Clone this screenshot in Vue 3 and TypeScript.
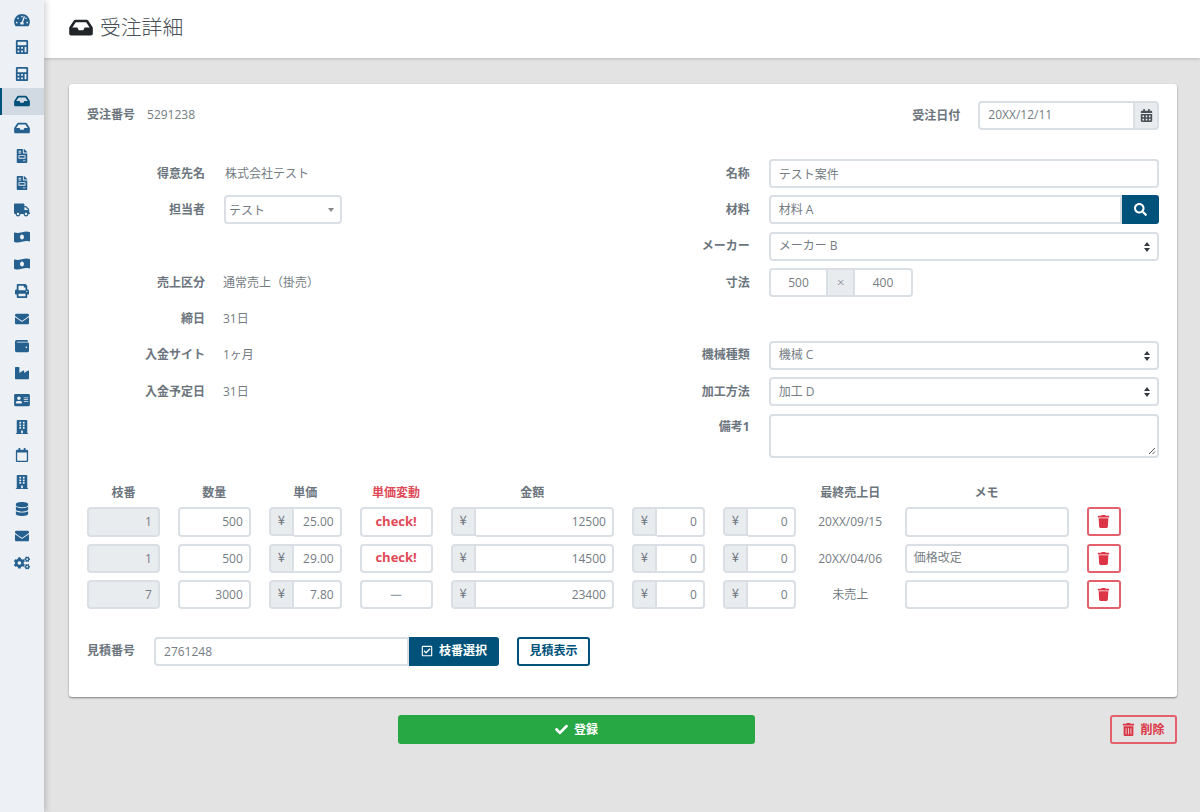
<script setup lang="ts">
const P: Record<string, [string, string]> = {
  tach: ['0 0 576 512', 'M288 32C128.94 32 0 160.94 0 320c0 52.8 14.25 102.26 39.06 144.8 5.61 9.62 16.3 15.2 27.44 15.2h443c11.14 0 21.83-5.58 27.44-15.2C561.75 422.26 576 372.8 576 320c0-159.06-128.94-288-288-288zm0 64c14.71 0 26.58 10.13 30.32 23.65-1.11 2.26-2.64 4.23-3.45 6.67l-9.22 27.67c-5.13 3.49-10.97 6.01-17.64 6.01-17.67 0-32-14.33-32-32S270.33 96 288 96zM96 384c-17.67 0-32-14.33-32-32s14.33-32 32-32 32 14.33 32 32-14.33 32-32 32zm48-160c-17.67 0-32-14.33-32-32s14.33-32 32-32 32 14.33 32 32-14.33 32-32 32zm246.77-72.41l-61.33 184C343.13 347.33 352 364.54 352 384c0 11.72-3.38 22.55-8.88 32H232.88c-5.5-9.45-8.88-20.28-8.88-32 0-33.94 26.5-61.43 59.9-63.59l61.34-184.01c4.17-12.56 17.73-19.45 30.36-15.17 12.57 4.19 19.35 17.79 15.17 30.36zm14.66 57.2l15.52-46.55c3.47-1.29 7.13-2.23 11.05-2.23 17.67 0 32 14.33 32 32s-14.33 32-32 32c-11.38-.01-20.89-6.28-26.57-15.22zM480 384c-17.67 0-32-14.33-32-32s14.33-32 32-32 32 14.33 32 32-14.33 32-32 32z'],
  calc: ['0 0 448 512', 'M400 0H48C22.4 0 0 22.4 0 48v416c0 25.6 22.4 48 48 48h352c25.6 0 48-22.4 48-48V48c0-25.6-22.4-48-48-48zM128 435c0 6.4-6.4 12.8-12.8 12.8H76.8c-6.4 0-12.8-6.4-12.8-12.8v-38.4c0-6.4 6.4-12.8 12.8-12.8h38.4c6.4 0 12.8 6.4 12.8 12.8V435zm0-128c0 6.4-6.4 12.8-12.8 12.8H76.8c-6.4 0-12.8-6.4-12.8-12.8v-38.4c0-6.4 6.4-12.8 12.8-12.8h38.4c6.4 0 12.8 6.4 12.8 12.8V307zm128 128c0 6.4-6.4 12.8-12.8 12.8h-38.4c-6.4 0-12.8-6.4-12.8-12.8v-38.4c0-6.4 6.4-12.8 12.8-12.8h38.4c6.4 0 12.8 6.4 12.8 12.8V435zm0-128c0 6.4-6.4 12.8-12.8 12.8h-38.4c-6.4 0-12.8-6.4-12.8-12.8v-38.4c0-6.4 6.4-12.8 12.8-12.8h38.4c6.4 0 12.8 6.4 12.8 12.8V307zm128 128c0 6.4-6.4 12.8-12.8 12.8h-38.4c-6.4 0-12.8-6.4-12.8-12.8V268.8c0-6.4 6.4-12.8 12.8-12.8h38.4c6.4 0 12.8 6.4 12.8 12.8V435zm0-256c0 6.4-6.4 12.8-12.8 12.8H76.8c-6.4 0-12.8-6.4-12.8-12.8V76.8C64 70.4 70.4 64 76.8 64h294.4c6.4 0 12.8 6.4 12.8 12.8V179z'],
  inbox: ['0 0 576 512', 'M567.938 243.908L462.25 85.374A48.003 48.003 0 0 0 422.311 64H153.689a48 48 0 0 0-39.938 21.374L8.062 243.908A47.994 47.994 0 0 0 0 270.533V400c0 26.51 21.49 48 48 48h480c26.51 0 48-21.49 48-48V270.533a47.994 47.994 0 0 0-8.062-26.625zM162.252 128h251.497l85.333 128H376l-32 64H232l-32-64H76.918l85.334-128z'],
  file: ['0 0 384 512', 'M288 256H96v64h192v-64zm89-151L279.1 7c-4.5-4.5-10.6-7-17-7H256v128h128v-6.1c0-6.3-2.5-12.4-7-16.9zm-153 31V0H24C10.7 0 0 10.7 0 24v464c0 13.3 10.7 24 24 24h336c13.3 0 24-10.7 24-24V160H248c-13.2 0-24-10.8-24-24zM64 72c0-4.42 3.58-8 8-8h80c4.42 0 8 3.58 8 8v16c0 4.42-3.58 8-8 8H72c-4.42 0-8-3.58-8-8V72zm0 64c0-4.42 3.58-8 8-8h80c4.42 0 8 3.58 8 8v16c0 4.42-3.58 8-8 8H72c-4.42 0-8-3.58-8-8v-16zm256 304c0 4.42-3.58 8-8 8h-80c-4.42 0-8-3.58-8-8v-16c0-4.42 3.58-8 8-8h80c4.42 0 8 3.58 8 8v16zm0-200v96c0 8.84-7.16 16-16 16H80c-8.84 0-16-7.16-16-16v-96c0-8.84 7.16-16 16-16h224c8.84 0 16 7.16 16 16z'],
  truck: ['0 0 640 512', 'M624 352h-16V243.9c0-12.7-5.1-24.9-14.1-33.9L494 110.1c-9-9-21.2-14.1-33.9-14.1H416V48c0-26.5-21.5-48-48-48H48C21.5 0 0 21.5 0 48v320c0 26.5 21.5 48 48 48h16c0 53 43 96 96 96s96-43 96-96h128c0 53 43 96 96 96s96-43 96-96h48c8.8 0 16-7.2 16-16v-32c0-8.8-7.2-16-16-16zM160 464c-26.5 0-48-21.5-48-48s21.5-48 48-48 48 21.5 48 48-21.5 48-48 48zm320 0c-26.5 0-48-21.5-48-48s21.5-48 48-48 48 21.5 48 48-21.5 48-48 48zm80-208H416V144h44.1l99.9 99.9V256z'],
  money: ['0 0 640 512', 'M621.16 54.46C582.37 38.19 543.55 32 504.75 32c-123.17-.01-246.33 62.34-369.5 62.34-30.89 0-61.76-3.92-92.65-13.72-3.47-1.1-6.95-1.62-10.35-1.62C15.04 79 0 92.32 0 110.81v317.26c0 12.63 7.23 24.6 18.84 29.46C57.63 473.81 96.45 480 135.25 480c123.17 0 246.34-62.35 369.51-62.35 30.89 0 61.76 3.92 92.65 13.72 3.47 1.1 6.95 1.62 10.35 1.62 17.21 0 32.25-13.32 32.25-31.81V83.93c-.01-12.64-7.24-24.6-18.85-29.47zM320 352c-44.19 0-80-42.99-80-96 0-53.02 35.82-96 80-96s80 42.98 80 96c0 53.03-35.83 96-80 96z'],
  print: ['0 0 512 512', 'M448 192V77.25c0-8.49-3.37-16.62-9.37-22.63L393.37 9.37c-6-6-14.14-9.37-22.63-9.37H96C78.33 0 64 14.33 64 32v160c-35.35 0-64 28.65-64 64v112c0 8.84 7.16 16 16 16h48v96c0 17.67 14.33 32 32 32h320c17.67 0 32-14.33 32-32v-96h48c8.84 0 16-7.16 16-16V256c0-35.35-28.65-64-64-64zm-64 256H128v-96h256v96zm0-224H128V64h192v48c0 8.84 7.16 16 16 16h48v96zm48 72c-13.25 0-24-10.75-24-24 0-13.26 10.75-24 24-24s24 10.74 24 24c0 13.25-10.75 24-24 24z'],
  mail: ['0 0 512 512', 'M502.3 190.8c3.9-3.1 9.7-.2 9.7 4.7V400c0 26.5-21.5 48-48 48H48c-26.5 0-48-21.5-48-48V195.6c0-5 5.7-7.8 9.7-4.7 22.4 17.4 52.1 39.5 154.1 113.6 21.1 15.4 56.7 47.8 92.2 47.6 35.7.3 72-32.8 92.3-47.6 102-74.1 131.6-96.3 154-113.7zM256 320c23.2.4 56.6-29.2 73.4-41.4 132.7-96.3 142.8-104.7 173.4-128.7 5.8-4.5 9.2-11.5 9.2-18.9v-19c0-26.5-21.5-48-48-48H48C21.5 64 0 85.5 0 112v19c0 7.4 3.4 14.3 9.2 18.9 30.6 23.9 40.7 32.4 173.4 128.7 16.8 12.2 50.2 41.8 73.4 41.4z'],
  wallet: ['0 0 512 512', 'M461.2 128H80c-8.84 0-16-7.16-16-16s7.16-16 16-16h384c8.84 0 16-7.16 16-16 0-26.51-21.49-48-48-48H64C28.65 32 0 60.65 0 96v320c0 35.35 28.65 64 64 64h397.2c28.02 0 50.8-21.53 50.8-48V176c0-26.47-22.78-48-50.8-48zM416 336c-17.67 0-32-14.33-32-32s14.33-32 32-32 32 14.33 32 32-14.33 32-32 32z'],
  industry: ['0 0 512 512', 'M475.115 163.781L336 252.309v-68.28c0-18.916-20.931-30.399-36.885-20.248L160 252.309V56c0-13.255-10.745-24-24-24H24C10.745 32 0 42.745 0 56v400c0 13.255 10.745 24 24 24h464c13.255 0 24-10.745 24-24V184.029c0-18.917-20.931-30.399-36.885-20.248z'],
  card: ['0 0 576 512', 'M528 32H48C21.5 32 0 53.5 0 80v352c0 26.5 21.5 48 48 48h480c26.5 0 48-21.5 48-48V80c0-26.5-21.5-48-48-48zm-352 96c35.3 0 64 28.7 64 64s-28.7 64-64 64-64-28.7-64-64 28.7-64 64-64zm112 236.8c0 10.6-10 19.2-22.4 19.2H86.4C74 384 64 375.4 64 364.8v-19.2c0-31.8 30.1-57.6 67.2-57.6h5c12.3 5.1 25.7 8 39.8 8s27.6-2.9 39.8-8h5c37.1 0 67.2 25.8 67.2 57.6v19.2zM512 312c0 4.4-3.6 8-8 8H360c-4.4 0-8-3.6-8-8v-16c0-4.4 3.6-8 8-8h144c4.4 0 8 3.6 8 8v16zm0-64c0 4.4-3.6 8-8 8H360c-4.4 0-8-3.6-8-8v-16c0-4.4 3.6-8 8-8h144c4.4 0 8 3.6 8 8v16zm0-64c0 4.4-3.6 8-8 8H360c-4.4 0-8-3.6-8-8v-16c0-4.4 3.6-8 8-8h144c4.4 0 8 3.6 8 8v16z'],
  building: ['0 0 448 512', 'M436 480h-20V24c0-13.255-10.745-24-24-24H56C42.745 0 32 10.745 32 24v456H12c-6.627 0-12 5.373-12 12v20h448v-20c0-6.627-5.373-12-12-12zM128 76c0-6.627 5.373-12 12-12h40c6.627 0 12 5.373 12 12v40c0 6.627-5.373 12-12 12h-40c-6.627 0-12-5.373-12-12V76zm0 96c0-6.627 5.373-12 12-12h40c6.627 0 12 5.373 12 12v40c0 6.627-5.373 12-12 12h-40c-6.627 0-12-5.373-12-12v-40zm52 148h-40c-6.627 0-12-5.373-12-12v-40c0-6.627 5.373-12 12-12h40c6.627 0 12 5.373 12 12v40c0 6.627-5.373 12-12 12zm76 160h-64v-84c0-6.627 5.373-12 12-12h40c6.627 0 12 5.373 12 12v84zm64-172c0 6.627-5.373 12-12 12h-40c-6.627 0-12-5.373-12-12v-40c0-6.627 5.373-12 12-12h40c6.627 0 12 5.373 12 12v40zm0-96c0 6.627-5.373 12-12 12h-40c-6.627 0-12-5.373-12-12v-40c0-6.627 5.373-12 12-12h40c6.627 0 12 5.373 12 12v40zm0-96c0 6.627-5.373 12-12 12h-40c-6.627 0-12-5.373-12-12V76c0-6.627 5.373-12 12-12h40c6.627 0 12 5.373 12 12v40z'],
  calendar: ['0 0 448 512', 'M400 64h-48V12c0-6.6-5.4-12-12-12h-40c-6.6 0-12 5.4-12 12v52H160V12c0-6.6-5.4-12-12-12h-40c-6.6 0-12 5.4-12 12v52H48C21.5 64 0 85.5 0 112v352c0 26.5 21.5 48 48 48h352c26.5 0 48-21.5 48-48V112c0-26.5-21.5-48-48-48zm-6 400H54c-3.3 0-6-2.7-6-6V160h352v298c0 3.3-2.7 6-6 6z'],
  calendarAlt: ['0 0 448 512', 'M0 464c0 26.5 21.5 48 48 48h352c26.5 0 48-21.5 48-48V192H0v272zm320-196c0-6.6 5.4-12 12-12h40c6.6 0 12 5.4 12 12v40c0 6.6-5.4 12-12 12h-40c-6.6 0-12-5.4-12-12v-40zm0 128c0-6.6 5.4-12 12-12h40c6.6 0 12 5.4 12 12v40c0 6.6-5.4 12-12 12h-40c-6.6 0-12-5.4-12-12v-40zM192 268c0-6.6 5.4-12 12-12h40c6.6 0 12 5.4 12 12v40c0 6.6-5.4 12-12 12h-40c-6.6 0-12-5.4-12-12v-40zm0 128c0-6.6 5.4-12 12-12h40c6.6 0 12 5.4 12 12v40c0 6.6-5.4 12-12 12h-40c-6.6 0-12-5.4-12-12v-40zM64 268c0-6.6 5.4-12 12-12h40c6.6 0 12 5.4 12 12v40c0 6.6-5.4 12-12 12H76c-6.6 0-12-5.4-12-12v-40zm0 128c0-6.6 5.4-12 12-12h40c6.6 0 12 5.4 12 12v40c0 6.6-5.4 12-12 12H76c-6.6 0-12-5.4-12-12v-40zM400 64h-48V16c0-8.8-7.2-16-16-16h-32c-8.8 0-16 7.2-16 16v48H160V16c0-8.8-7.2-16-16-16h-32c-8.8 0-16 7.2-16 16v48H48C21.5 64 0 85.5 0 112v48h448v-48c0-26.5-21.5-48-48-48z'],
  database: ['0 0 448 512', 'M448 73.143v45.714C448 159.143 347.667 192 224 192S0 159.143 0 118.857V73.143C0 32.857 100.333 0 224 0s224 32.857 224 73.143zM448 176v102.857C448 319.143 347.667 352 224 352S0 319.143 0 278.857V176c48.125 33.143 136.208 48.572 224 48.572S399.874 209.143 448 176zm0 160v102.857C448 479.143 347.667 512 224 512S0 479.143 0 438.857V336c48.125 33.143 136.208 48.572 224 48.572S399.874 369.143 448 336z'],
  cogs: ['0 0 640 512', 'M512.1 191l-8.2 14.3c-3 5.3-9.4 7.5-15.1 5.4-11.8-4.4-22.6-10.7-32.1-18.6-4.6-3.8-5.8-10.5-2.8-15.7l8.2-14.3c-6.9-8-12.3-17.3-15.9-27.4h-16.5c-6 0-11.2-4.3-12.2-10.3-2-12-2.1-24.6 0-37.1 1-6 6.2-10.4 12.2-10.4h16.5c3.6-10.1 9-19.4 15.9-27.4l-8.2-14.3c-3-5.2-1.9-11.9 2.8-15.7 9.5-7.9 20.4-14.2 32.1-18.6 5.7-2.1 12.1.1 15.1 5.4l8.2 14.3c10.5-1.9 21.2-1.9 31.7 0L552 6.3c3-5.3 9.4-7.5 15.1-5.4 11.8 4.4 22.6 10.7 32.1 18.6 4.6 3.8 5.8 10.5 2.8 15.7l-8.2 14.3c6.9 8 12.3 17.3 15.9 27.4h16.5c6 0 11.2 4.3 12.2 10.3 2 12 2.1 24.6 0 37.1-1 6-6.2 10.4-12.2 10.4h-16.5c-3.6 10.1-9 19.4-15.9 27.4l8.2 14.3c3 5.2 1.9 11.9-2.8 15.7-9.5 7.9-20.4 14.2-32.1 18.6-5.7 2.1-12.1-.1-15.1-5.4l-8.2-14.3c-10.4 1.9-21.2 1.9-31.7 0zm-10.5-58.8c38.5 29.6 82.4-14.3 52.8-52.8-38.5-29.7-82.4 14.3-52.8 52.8zM386.3 286.1l33.7 16.8c10.1 5.8 14.5 18.1 10.5 29.1-8.9 24.2-26.4 46.4-42.6 65.8-7.4 8.9-20.2 11.1-30.3 5.3l-29.1-16.8c-16 13.7-34.6 24.6-54.9 31.7v33.6c0 11.6-8.3 21.6-19.7 23.6-24.6 4.2-50.4 4.4-75.9 0-11.5-2-20-11.9-20-23.6V418c-20.3-7.2-38.9-18-54.9-31.7L74 403c-10 5.8-22.9 3.6-30.3-5.3-16.2-19.4-33.3-41.6-42.2-65.7-4-10.9.4-23.2 10.5-29.1l33.3-16.8c-3.9-20.9-3.9-42.4 0-63.4L12 205.8c-10.1-5.8-14.6-18.1-10.5-29 8.9-24.2 26-46.4 42.2-65.8 7.4-8.9 20.2-11.1 30.3-5.3l29.1 16.8c16-13.7 34.6-24.6 54.9-31.7V57.1c0-11.5 8.2-21.5 19.6-23.5 24.6-4.2 50.5-4.4 76-.1 11.5 2 20 11.9 20 23.6v33.6c20.3 7.2 38.9 18 54.9 31.7l29.1-16.8c10-5.8 22.9-3.6 30.3 5.3 16.2 19.4 33.2 41.6 42.1 65.8 4 10.9.1 23.2-10 29.1l-33.7 16.8c3.9 21 3.9 42.5 0 63.5zm-117.6 21.1c59.2-77-28.7-164.9-105.7-105.7-59.2 77 28.7 164.9 105.7 105.7zm243.4 182.7l-8.2 14.3c-3 5.3-9.4 7.5-15.1 5.4-11.8-4.4-22.6-10.7-32.1-18.6-4.6-3.8-5.8-10.5-2.8-15.7l8.2-14.3c-6.9-8-12.3-17.3-15.9-27.4h-16.5c-6 0-11.2-4.3-12.2-10.3-2-12-2.1-24.6 0-37.1 1-6 6.2-10.4 12.2-10.4h16.5c3.6-10.1 9-19.4 15.9-27.4l-8.2-14.3c-3-5.2-1.9-11.9 2.8-15.7 9.5-7.9 20.4-14.2 32.1-18.6 5.7-2.1 12.1.1 15.1 5.4l8.2 14.3c10.5-1.9 21.2-1.9 31.7 0l8.2-14.3c3-5.3 9.4-7.5 15.1-5.4 11.8 4.4 22.6 10.7 32.1 18.6 4.6 3.8 5.8 10.5 2.8 15.7l-8.2 14.3c6.9 8 12.3 17.3 15.9 27.4h16.5c6 0 11.2 4.3 12.2 10.3 2 12 2.1 24.6 0 37.1-1 6-6.2 10.4-12.2 10.4h-16.5c-3.6 10.1-9 19.4-15.9 27.4l8.2 14.3c3 5.2 1.9 11.9-2.8 15.7-9.5 7.9-20.4 14.2-32.1 18.6-5.7 2.1-12.1-.1-15.1-5.4l-8.2-14.3c-10.4 1.9-21.2 1.9-31.7 0zM501.6 431c38.5 29.6 82.4-14.3 52.8-52.8-38.5-29.6-82.4 14.3-52.8 52.8z'],
  trash: ['0 0 448 512', 'M432 32H312l-9.4-18.7A24 24 0 0 0 281.1 0H166.8a23.72 23.72 0 0 0-21.4 13.3L136 32H16A16 16 0 0 0 0 48v32a16 16 0 0 0 16 16h416a16 16 0 0 0 16-16V48a16 16 0 0 0-16-16zM53.2 467a48 48 0 0 0 47.9 45h245.8a48 48 0 0 0 47.9-45L416 128H32z'],
  trashAlt: ['0 0 448 512', 'M32 464a48 48 0 0 0 48 48h288a48 48 0 0 0 48-48V128H32zm272-256a16 16 0 0 1 32 0v224a16 16 0 0 1-32 0zm-96 0a16 16 0 0 1 32 0v224a16 16 0 0 1-32 0zm-96 0a16 16 0 0 1 32 0v224a16 16 0 0 1-32 0zM432 32H312l-9.4-18.7A24 24 0 0 0 281.1 0H166.8a23.72 23.72 0 0 0-21.4 13.3L136 32H16A16 16 0 0 0 0 48v32a16 16 0 0 0 16 16h416a16 16 0 0 0 16-16V48a16 16 0 0 0-16-16z'],
  search: ['0 0 512 512', 'M505 442.7L405.3 343c-4.5-4.5-10.6-7-17-7H372c27.6-35.3 44-79.7 44-128C416 93.1 322.9 0 208 0S0 93.1 0 208s93.1 208 208 208c48.3 0 92.7-16.4 128-44v16.3c0 6.4 2.5 12.5 7 17l99.7 99.7c9.4 9.4 24.6 9.4 33.9 0l28.3-28.3c9.4-9.4 9.4-24.6.1-34zM208 336c-70.7 0-128-57.2-128-128 0-70.7 57.2-128 128-128 70.7 0 128 57.2 128 128 0 70.7-57.2 128-128 128z'],
  check: ['0 0 512 512', 'M173.898 439.404l-166.4-166.4c-9.997-9.997-9.997-26.206 0-36.204l36.203-36.204c9.997-9.998 26.207-9.998 36.204 0L192 312.69 432.095 72.596c9.997-9.997 26.207-9.997 36.204 0l36.203 36.204c9.997 9.997 9.997 26.206 0 36.204l-294.4 294.401c-9.998 9.997-26.207 9.997-36.204-.001z'],
  checkSquare: ['0 0 448 512', 'M400 32H48C21.49 32 0 53.49 0 80v352c0 26.51 21.49 48 48 48h352c26.51 0 48-21.49 48-48V80c0-26.51-21.49-48-48-48zm0 400H48V80h352v352zm-35.864-241.724L191.547 361.48c-4.705 4.667-12.303 4.637-16.97-.068l-90.781-91.516c-4.667-4.705-4.637-12.303.069-16.971l22.719-22.536c4.705-4.667 12.303-4.637 16.97.069l59.792 60.277 141.352-140.216c4.705-4.667 12.303-4.637 16.97.068l22.536 22.718c4.667 4.706 4.637 12.304-.068 16.971z'],
}
const nav = ['tach','calc','calc','inbox','inbox','file','file','truck','money','money','print','mail','wallet','industry','card','building','calendar','building','database','mail','cogs']
const rows = [
  { no: '1', qty: '500', price: '25.00', chg: 'check!', amt: '12500', last: '20XX/09/15', memo: '', tall: true },
  { no: '1', qty: '500', price: '29.00', chg: 'check!', amt: '14500', last: '20XX/04/06', memo: '価格改定', tall: false },
  { no: '7', qty: '3000', price: '7.80', chg: 'ー', amt: '23400', last: '未売上', memo: '', tall: false },
]
</script>

<template>
  <div class="page">
    <nav class="side">
      <a v-for="(n, i) in nav" :key="i" class="nav-item" :class="{ active: i === 3 }">
        <svg class="nav-ico" :viewBox="P[n][0]"><path :d="P[n][1]" /></svg>
      </a>
    </nav>
    <div class="content">
      <header class="top">
        <svg class="top-ico" :viewBox="P.inbox[0]"><path :d="P.inbox[1]" /></svg>
        <h1>受注詳細</h1>
      </header>
      <main class="main">
        <section class="panel">
          <div class="head-row">
            <div class="head-left">
              <span class="lbl">受注番号</span>
              <span class="val">5291238</span>
            </div>
            <div class="head-right">
              <span class="lbl">受注日付</span>
              <div class="group date">
                <div class="ctl grow up">20XX/12/11</div>
                <div class="addon cal"><svg class="i13" :viewBox="P.calendarAlt[0]"><path :d="P.calendarAlt[1]" /></svg></div>
              </div>
            </div>
          </div>

          <div class="form">
            <div class="col-l">
              <div class="f"><span class="lbl">得意先名</span><span class="val company">株式会社テスト</span></div>
              <div class="f"><span class="lbl">担当者</span><div class="ctl pick">テスト<span class="caret"></span></div></div>
              <div class="f"></div>
              <div class="f"><span class="lbl">売上区分</span><span class="val">通常売上（掛売）</span></div>
              <div class="f"><span class="lbl">締日</span><span class="val">31日</span></div>
              <div class="f"><span class="lbl">入金サイト</span><span class="val">1ヶ月</span></div>
              <div class="f"><span class="lbl">入金予定日</span><span class="val">31日</span></div>
            </div>
            <div class="col-r">
              <div class="f"><span class="lbl">名称</span><div class="ctl grow">テスト案件</div></div>
              <div class="f"><span class="lbl">材料</span>
                <div class="group grow"><div class="ctl grow up">材料 A</div>
                  <button class="btn-navy search"><svg class="i13" :viewBox="P.search[0]"><path :d="P.search[1]" /></svg></button>
                </div>
              </div>
              <div class="f"><span class="lbl">メーカー</span><div class="ctl grow sel up">メーカー B<span class="updown"></span></div></div>
              <div class="f"><span class="lbl">寸法</span>
                <div class="group size"><div class="ctl num-c">500</div><div class="addon x">×</div><div class="ctl num-c">400</div></div>
              </div>
              <div class="f"></div>
              <div class="f"><span class="lbl">機械種類</span><div class="ctl grow sel up">機械 C<span class="updown"></span></div></div>
              <div class="f"><span class="lbl">加工方法</span><div class="ctl grow sel up">加工 D<span class="updown"></span></div></div>
              <div class="f area-row"><span class="lbl">備考1</span><div class="ctl grow area"><svg class="grip" viewBox="0 0 8 8"><path d="M7 1 1 7M7 4.5 4.5 7" /></svg></div></div>
            </div>
          </div>

          <div class="grid heads">
            <span>枝番</span><span>数量</span><span>単価</span><span class="red">単価変動</span><span>金額</span><span></span><span></span><span>最終売上日</span><span>メモ</span><span></span>
          </div>
          <div v-for="(r, i) in rows" :key="i" class="grid line" :class="{ tall: r.tall }">
            <div class="ctl ro right">{{ r.no }}</div>
            <div class="ctl right">{{ r.qty }}</div>
            <div class="group"><div class="addon yen">¥</div><div class="ctl right grow">{{ r.price }}</div></div>
            <div class="ctl chg" :class="{ alert: r.chg === 'check!' }">{{ r.chg }}</div>
            <div class="group"><div class="addon yen">¥</div><div class="ctl right grow">{{ r.amt }}</div></div>
            <div class="group"><div class="addon yen">¥</div><div class="ctl right grow">0</div></div>
            <div class="group"><div class="addon yen">¥</div><div class="ctl right grow">0</div></div>
            <div class="last">{{ r.last }}</div>
            <div class="ctl memo">{{ r.memo }}</div>
            <button class="trash"><svg class="i13" :viewBox="P.trash[0]"><path :d="P.trash[1]" /></svg></button>
          </div>

          <div class="quote">
            <span class="lbl">見積番号</span>
            <div class="group q">
              <div class="ctl grow">2761248</div>
              <button class="btn-navy pick-btn"><svg class="i12" :viewBox="P.checkSquare[0]"><path :d="P.checkSquare[1]" /></svg><span class="t">枝番選択</span></button>
            </div>
            <button class="outline"><span class="t">見積表示</span></button>
          </div>
        </section>

        <div class="foot">
          <button class="save"><svg class="i13" :viewBox="P.check[0]"><path :d="P.check[1]" /></svg><span class="t">登録</span></button>
          <button class="del"><svg class="i13" :viewBox="P.trashAlt[0]"><path :d="P.trashAlt[1]" /></svg><span class="t">削除</span></button>
        </div>
      </main>
    </div>
  </div>
</template>

<style>
html, body { margin: 0; padding: 0; background: #e3e3e3; }
</style>

<style scoped>
.page {
  display: flex;
  height: 812px;
  overflow: hidden;
  font-family: "Open Sans", "Noto Sans CJK JP", sans-serif;
  font-size: 12px;
  color: #757c83;
  background: #e3e3e3;
}
.side {
  width: 44px;
  flex: none;
  padding-top: 6px;
  box-sizing: border-box;
  background: #edf1f5;
  box-shadow: 2px 0 6px rgba(0, 0, 0, .18);
  position: relative;
  z-index: 2;
}
.nav-item {
  display: flex;
  align-items: center;
  justify-content: center;
  height: 27.2px;
  box-sizing: border-box;
}
.nav-item.active { background: #d1dae2; border-left: 2px solid #00527a; padding-right: 2px; }
.nav-ico { height: 14px; width: 16px; fill: #25608f; }
.nav-item.active .nav-ico { fill: #00527a; }
.content { flex: 1; min-width: 0; display: flex; flex-direction: column; }
.top {
  height: 58px;
  flex: none;
  background: #fff;
  display: flex;
  align-items: center;
  padding: 0 0 3px 25px;
  box-sizing: border-box;
  box-shadow: 0 1px 3px rgba(0, 0, 0, .18);
  position: relative;
  z-index: 1;
}
.top-ico { width: 24px; height: 21px; fill: #212529; margin-right: 7px; }
h1 { margin: 0; font-size: 20.8px; font-weight: 300; color: #495057; line-height: 1; }
.main { padding: 26px 23px 0 25px; }
.panel {
  background: #fff;
  border-radius: 3px;
  box-shadow: 0 1px 2px rgba(0, 0, 0, .45);
  padding: 17px 17.7px 31px 18px;
  height: 613px;
  box-sizing: border-box;
}
.lbl { font-weight: 700; color: #6c757d; white-space: nowrap; padding-bottom: 2px; }
.val { white-space: nowrap; padding-bottom: 2px; }
.head-row { display: flex; justify-content: space-between; height: 29px; margin-bottom: 29px; }
.head-left { display: flex; align-items: center; gap: 12px; height: 27px; }
.head-left .val { padding-bottom: 0; }
.head-right { display: flex; align-items: center; gap: 18px; }
.group { display: flex; min-width: 0; }
.group.date { width: 181px; }
.grow { flex: 1; min-width: 0; }
.ctl {
  height: 29px;
  box-sizing: border-box;
  border: 2px solid #dadfe5;
  border-radius: 4px;
  background: #fff;
  padding: 0 8px;
  display: flex;
  align-items: center;
  color: #757c83;
  white-space: nowrap;
  position: relative;
}
.ctl.up { padding-bottom: 2px; }
.addon {
  height: 29px;
  box-sizing: border-box;
  background: #e9ecef;
  border: 2px solid #dadfe5;
  display: flex;
  align-items: center;
  justify-content: center;
  color: #6c757d;
}
.group > .ctl:not(:last-child) { border-top-right-radius: 0; border-bottom-right-radius: 0; }
.group > .ctl:not(:first-child) { border-top-left-radius: 0; border-bottom-left-radius: 0; border-left: 0; }
.group > .addon:first-child { border-radius: 4px 0 0 4px; }
.group > .addon:last-child { border-radius: 0 4px 4px 0; border-left: 0; }
.cal { width: 24px; color: #495057; }
.i13 { width: 13px; height: 13px; fill: currentColor; }
.i12 { width: 12px; height: 12px; fill: currentColor; }
.form { display: grid; grid-template-columns: 1fr 390.6px; column-gap: 0; }
.col-l, .col-r { display: flex; flex-direction: column; }
.f { display: flex; align-items: center; height: 29px; margin-bottom: 7.4px; }
.col-l .f .lbl { width: 118px; text-align: right; margin-right: 18px; flex: none; }
.company { margin-left: 2px; }
.col-r { position: relative; }
.col-r .f .lbl { width: 70px; margin-left: -89px; margin-right: 19px; text-align: right; flex: none; }
.pick { width: 118px; padding: 0 3px; margin-left: 1px; }
.caret {
  position: absolute;
  right: 6px;
  top: 11px;
  border: 3.5px solid transparent;
  border-top: 4px solid #888;
  border-bottom: 0;
}
.updown {
  position: absolute;
  right: 6px;
  top: 8px;
  width: 7px;
  height: 10px;
}
.updown::before, .updown::after {
  content: "";
  position: absolute;
  left: 0;
  border: 3.5px solid transparent;
}
.updown::before { top: 0; border-top: 0; border-bottom: 4px solid #343a40; }
.updown::after { bottom: 0; border-bottom: 0; border-top: 4px solid #343a40; }
.btn-navy {
  border: 0;
  background: #00527a;
  color: #fff;
  font: inherit;
  display: flex;
  align-items: center;
  justify-content: center;
  border-radius: 0 3px 3px 0;
  padding: 0;
}
.search { width: 37px; flex: none; }
.size { width: 144px; }
.num-c { justify-content: center; flex: 1; min-width: 0; padding: 0; }
.x { width: 25px; flex: none; border-left: 0; border-right: 0; font-size: 13px; font-weight: 300; padding-bottom: 2px; }
.group.size > .x + .ctl { border-left: 2px solid #dadfe5; }
.area-row { height: 44px; margin-bottom: 0; align-items: flex-start; }
.area-row .lbl { margin-top: 3px; }
.area { height: 44px; }
.grip { position: absolute; right: 1px; bottom: 1px; width: 8px; height: 8px; stroke: #555; stroke-width: 1; fill: none; }
.grid {
  display: grid;
  grid-template-columns: 72.9px 72.9px 72.9px 72.9px 163.4px 72.9px 72.9px 72.9px 164px 34px;
  column-gap: 18px;
}
.heads {
  margin-top: 25px;
  height: 24px;
  box-sizing: border-box;
  padding-bottom: 10px;
  align-items: center;
  text-align: center;
  font-weight: 700;
  color: #6c757d;
  white-space: nowrap;
}
.red { color: #e04a58; }
.line { height: 29px; margin-bottom: 7px; align-items: stretch; }
.line.tall { height: 30px; }
.line.tall .ctl { height: 30px; }
.right { justify-content: flex-end; padding: 0 6px 0 8px; }
.ro { background: #e9ecef; }
.yen { width: 25px; flex: none; font-family: "Noto Sans CJK JP", sans-serif; font-size: 13px; padding-bottom: 3px; }
.group > .yen + .ctl { padding-left: 4px; }
.line .group .addon { height: 29px; }
.chg { justify-content: center; padding: 0; color: #9aa3ab; font-size: 13px; }
.chg.alert { color: #e04a58; font-weight: 700; padding-bottom: 2px; }
.memo { padding: 0 7px 2px; }
.last { display: flex; align-items: center; justify-content: center; white-space: nowrap; }
.trash {
  width: 34px;
  height: 29px;
  box-sizing: border-box;
  background: #fff;
  border: 2px solid #e4606d;
  border-radius: 3px;
  color: #dc3545;
  display: flex;
  align-items: center;
  justify-content: center;
  padding: 0;
}
.quote { display: flex; align-items: center; margin-top: 28px; height: 29px; }
.q { width: 345px; margin-left: 19px; }
.pick-btn { width: 90px; flex: none; gap: 6px; font-weight: 700; }
.t { position: relative; top: -1px; }
.outline {
  width: 73px;
  height: 29px;
  margin-left: 18px;
  background: #fff;
  border: 2px solid #00527a;
  border-radius: 3px;
  color: #00527a;
  font: inherit;
  font-weight: 700;
  padding: 0;
}
.foot { display: grid; grid-template-columns: 357px 67px; justify-content: space-between; margin-top: 18px; padding-left: 329px; }
.save {
  height: 29px;
  background: #28a745;
  border: 0;
  border-radius: 3px;
  color: #fff;
  font: inherit;
  font-weight: 700;
  display: flex;
  align-items: center;
  justify-content: center;
  gap: 6px;
  padding: 0;
}
.del {
  height: 29px;
  box-sizing: border-box;
  background: transparent;
  border: 2px solid #e4606d;
  border-radius: 3px;
  color: #dc3545;
  font: inherit;
  font-weight: 700;
  display: flex;
  align-items: center;
  justify-content: center;
  gap: 5px;
  padding: 0;
}
</style>
